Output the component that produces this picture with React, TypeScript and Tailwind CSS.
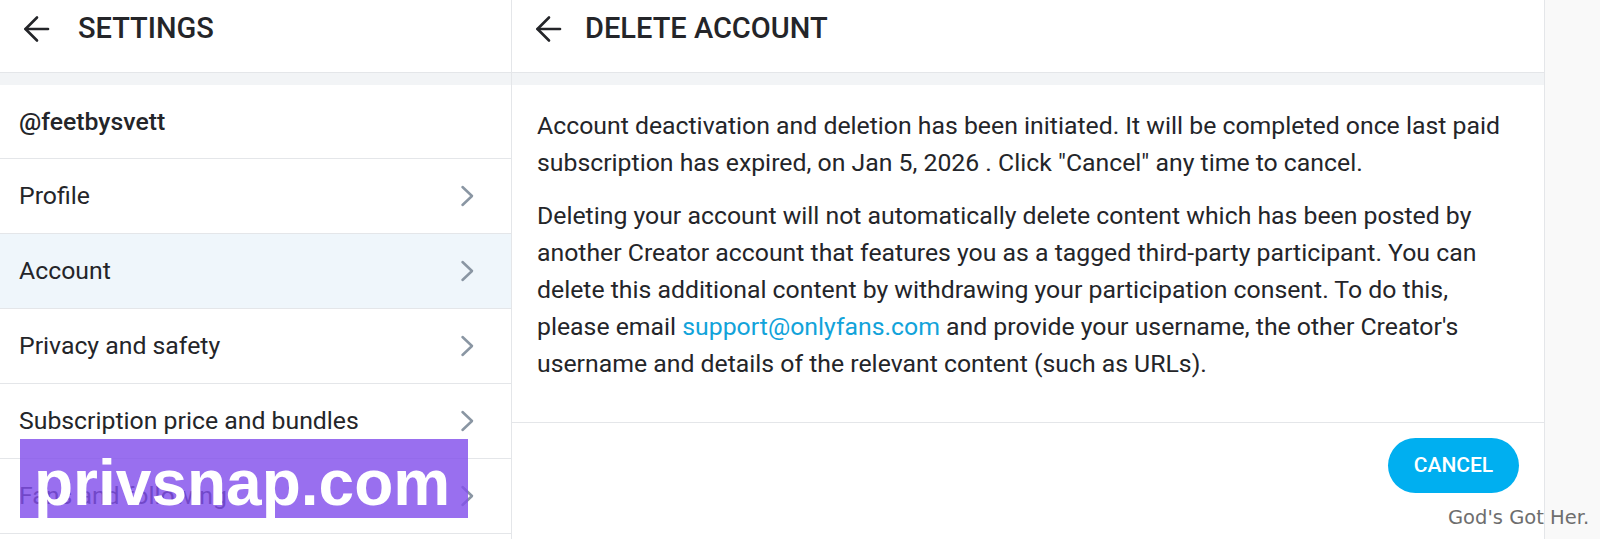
import type { ReactNode } from "react"

const BackArrow = () => (
  <svg width="27" height="28" viewBox="0 0 27 28" fill="none" stroke="#242529" strokeWidth="2.6" strokeLinecap="round" strokeLinejoin="round">
    <path d="M25 14H2.5" />
    <path d="M14 2.5L2.5 14L14 25.5" />
  </svg>
)

const Chevron = () => (
  <svg width="15" height="22" viewBox="0 0 15 22" fill="none" stroke="#8a96a3" strokeWidth="2.5" strokeLinecap="round" strokeLinejoin="round">
    <path d="M2.5 2L12 11L2.5 20" />
  </svg>
)

const menuItems = [
  { label: "Profile" },
  { label: "Account", active: true },
  { label: "Privacy and safety" },
  { label: "Subscription price and bundles" },
  { label: "Fans and following" },
]

const Header = ({ title, gap, children }: { title: string; gap: string; children?: ReactNode }) => (
  <div className="flex h-[73px] shrink-0 items-start border-b border-[#e4e6e9] pl-[23px] pt-[14px]">
    <div className="flex h-[29px] items-center">
      <BackArrow />
      <h1 className={`${gap} text-[29px] font-medium uppercase leading-none text-[#242529]`}>{title}</h1>
    </div>
    {children}
  </div>
)

const Strip = () => <div className="h-[12px] shrink-0 bg-[#f2f4f6]" />

const SettingsMenu = () => (
  <div className="flex w-[512px] shrink-0 flex-col border-r border-[#e4e6e9] bg-white">
    <Header title="Settings" gap="ml-[28px]" />
    <Strip />
    <div className="flex h-[74px] items-center border-b border-[#e4e6e9] pl-[19px] text-[24.8px] font-medium text-[#242529]">
      @feetbysvett
    </div>
    {menuItems.map(item => (
      <div
        key={item.label}
        className={`flex h-[75px] items-center justify-between border-b border-[#e4e6e9] pl-[19px] pr-[36px] text-[24.8px] text-[#242529] ${
          item.active ? "bg-[#eff6fb]" : "bg-white"
        }`}
      >
        <span>{item.label}</span>
        <Chevron />
      </div>
    ))}
  </div>
)

const DeleteAccount = () => (
  <div className="flex w-[1033px] shrink-0 flex-col border-r border-[#e4e6e9] bg-white">
    <Header title="Delete account" gap="ml-[23px]" />
    <Strip />
    <div className="flex flex-col gap-[16px] px-[25px] pb-[40px] pt-[22px] text-[24.8px] leading-[37px] text-[#242529]">
      <p>
        Account deactivation and deletion has been initiated. It will be completed once last paid subscription has
        expired, on Jan 5, 2026 . Click "Cancel" any time to cancel.
      </p>
      <p>
        Deleting your account will not automatically delete content which has been posted by another Creator account
        that features you as a tagged third-party participant. You can delete this additional content by withdrawing
        your participation consent. To do this, please email{" "}
        <a className="text-[#12a3da]">support@onlyfans.com</a> and provide your username, the other Creator's username
        and details of the relevant content (such as URLs).
      </p>
    </div>
    <div className="flex justify-end border-t border-[#e4e6e9] px-[25px] pt-[15px]">
      <button className="h-[55px] w-[131px] rounded-full bg-[#00aff0] text-[21px] font-medium uppercase text-white">
        Cancel
      </button>
    </div>
  </div>
)

export default function App() {
  return (
    <div className="relative flex h-[539px] w-[1600px] overflow-hidden bg-[#f9f9f9] font-['Roboto',sans-serif]">
      <SettingsMenu />
      <DeleteAccount />

      <div className="absolute left-[20px] top-[439px] flex h-[79px] w-[448px] items-start bg-[rgba(130,79,236,0.82)] pl-[14px] pt-[6px] font-['Liberation_Sans',Arial,sans-serif] text-[64px] font-bold leading-[76px] text-white">
        privsnap.com
      </div>
      <div className="absolute left-[1448px] top-[508px] font-['DejaVu_Sans',sans-serif] text-[19.5px] leading-[19px] text-[#6e6e6e]">
        God's Got Her.
      </div>
    </div>
  )
}
